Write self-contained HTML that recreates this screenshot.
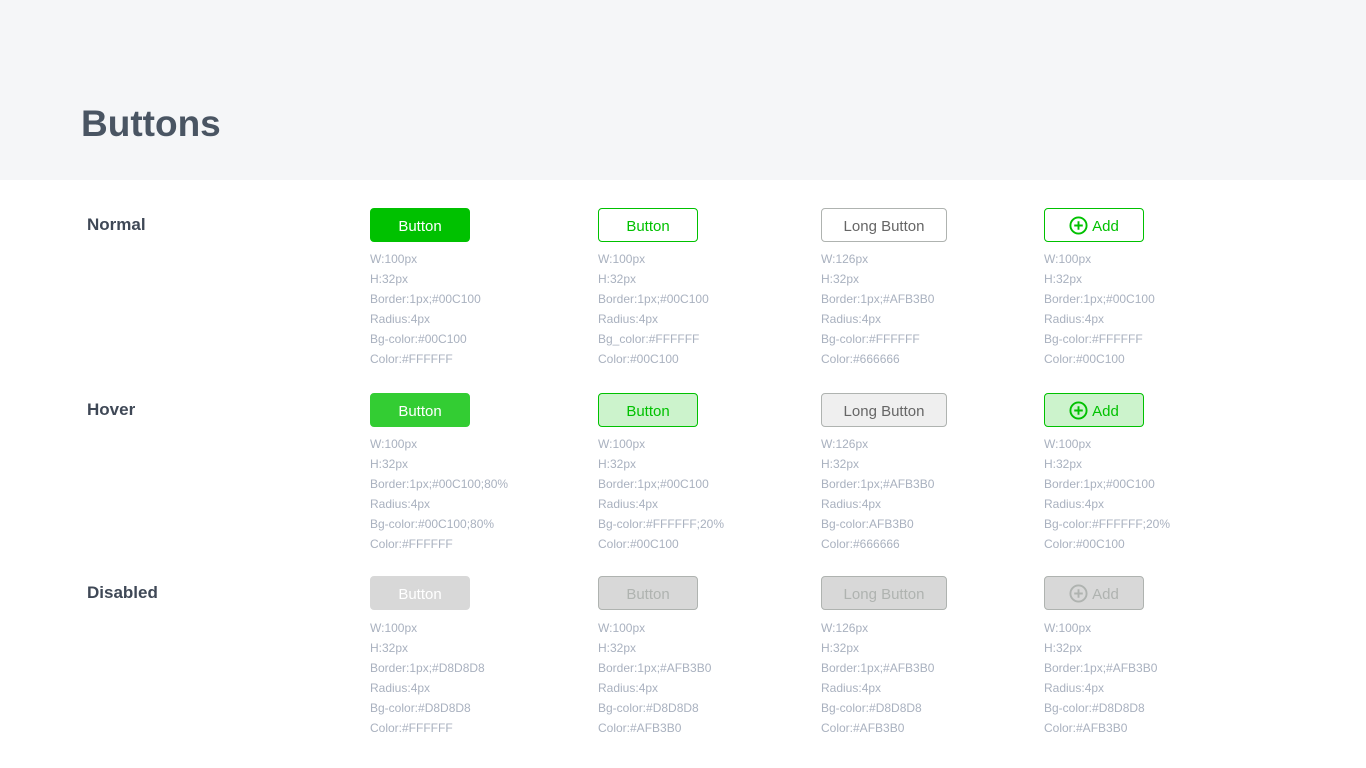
<!DOCTYPE html>
<html><head><meta charset="utf-8"><style>
*{margin:0;padding:0;box-sizing:border-box}
body{width:1366px;height:768px;background:#fff;font-family:"Liberation Sans",sans-serif;position:relative;overflow:hidden}
.hd{position:absolute;left:0;top:0;width:1366px;height:180px;background:#f5f6f8}
.hd h1{position:absolute;left:81px;top:100px;font-size:37px;line-height:48px;font-weight:bold;color:#4a5563}
.lbl{position:absolute;left:87px;font-size:17px;font-weight:bold;color:#3f4856}
.b{position:absolute;height:34px;border-radius:4px;border:1px solid;font-size:15px;display:flex;align-items:center;justify-content:center;gap:4px;padding-top:2px}
.s{position:absolute;font-size:12px;line-height:20px;color:#a9b1bf}
svg{display:block;margin-top:-2px}
</style></head><body>
<div class="hd"><h1>Buttons</h1></div>

<div class="lbl" style="top:215px">Normal</div>
<div class="lbl" style="top:400px">Hover</div>
<div class="lbl" style="top:583px">Disabled</div>

<div class="b" style="left:370px;top:208px;width:100px;background:#00c100;border-color:#00c100;color:#fff">Button</div>
<div class="b" style="left:598px;top:208px;width:100px;background:#fff;border-color:#00c100;color:#00c100">Button</div>
<div class="b" style="left:821px;top:208px;width:126px;background:#fff;border-color:#afb3b0;color:#666">Long Button</div>
<div class="b" style="left:1044px;top:208px;width:100px;background:#fff;border-color:#00c100;color:#00c100"><svg width="19" height="19" viewBox="0 0 20 20"><circle cx="10" cy="10" r="8.5" fill="none" stroke="#00c100" stroke-width="2"/><path d="M10 5.5v9M5.5 10h9" stroke="#00c100" stroke-width="2"/></svg>Add</div>

<div class="s" style="left:370px;top:249px">W:100px<br>H:32px<br>Border:1px;#00C100<br>Radius:4px<br>Bg-color:#00C100<br>Color:#FFFFFF</div>
<div class="s" style="left:598px;top:249px">W:100px<br>H:32px<br>Border:1px;#00C100<br>Radius:4px<br>Bg_color:#FFFFFF<br>Color:#00C100</div>
<div class="s" style="left:821px;top:249px">W:126px<br>H:32px<br>Border:1px;#AFB3B0<br>Radius:4px<br>Bg-color:#FFFFFF<br>Color:#666666</div>
<div class="s" style="left:1044px;top:249px">W:100px<br>H:32px<br>Border:1px;#00C100<br>Radius:4px<br>Bg-color:#FFFFFF<br>Color:#00C100</div>

<div class="b" style="left:370px;top:393px;width:100px;background:#33cd33;border-color:#33cd33;color:#fff">Button</div>
<div class="b" style="left:598px;top:393px;width:100px;background:#ccf3cc;border-color:#00c100;color:#00c100">Button</div>
<div class="b" style="left:821px;top:393px;width:126px;background:#efefef;border-color:#afb3b0;color:#666">Long Button</div>
<div class="b" style="left:1044px;top:393px;width:100px;background:#ccf3cc;border-color:#00c100;color:#00c100"><svg width="19" height="19" viewBox="0 0 20 20"><circle cx="10" cy="10" r="8.5" fill="none" stroke="#00c100" stroke-width="2"/><path d="M10 5.5v9M5.5 10h9" stroke="#00c100" stroke-width="2"/></svg>Add</div>

<div class="s" style="left:370px;top:434px">W:100px<br>H:32px<br>Border:1px;#00C100;80%<br>Radius:4px<br>Bg-color:#00C100;80%<br>Color:#FFFFFF</div>
<div class="s" style="left:598px;top:434px">W:100px<br>H:32px<br>Border:1px;#00C100<br>Radius:4px<br>Bg-color:#FFFFFF;20%<br>Color:#00C100</div>
<div class="s" style="left:821px;top:434px">W:126px<br>H:32px<br>Border:1px;#AFB3B0<br>Radius:4px<br>Bg-color:AFB3B0<br>Color:#666666</div>
<div class="s" style="left:1044px;top:434px">W:100px<br>H:32px<br>Border:1px;#00C100<br>Radius:4px<br>Bg-color:#FFFFFF;20%<br>Color:#00C100</div>

<div class="b" style="left:370px;top:576px;width:100px;background:#d8d8d8;border-color:#d8d8d8;color:#fff">Button</div>
<div class="b" style="left:598px;top:576px;width:100px;background:#d8d8d8;border-color:#afb3b0;color:#afb3b0">Button</div>
<div class="b" style="left:821px;top:576px;width:126px;background:#d8d8d8;border-color:#afb3b0;color:#afb3b0">Long Button</div>
<div class="b" style="left:1044px;top:576px;width:100px;background:#d8d8d8;border-color:#afb3b0;color:#afb3b0"><svg width="19" height="19" viewBox="0 0 20 20"><circle cx="10" cy="10" r="8.5" fill="none" stroke="#afb3b0" stroke-width="2"/><path d="M10 5.5v9M5.5 10h9" stroke="#afb3b0" stroke-width="2"/></svg>Add</div>

<div class="s" style="left:370px;top:618px">W:100px<br>H:32px<br>Border:1px;#D8D8D8<br>Radius:4px<br>Bg-color:#D8D8D8<br>Color:#FFFFFF</div>
<div class="s" style="left:598px;top:618px">W:100px<br>H:32px<br>Border:1px;#AFB3B0<br>Radius:4px<br>Bg-color:#D8D8D8<br>Color:#AFB3B0</div>
<div class="s" style="left:821px;top:618px">W:126px<br>H:32px<br>Border:1px;#AFB3B0<br>Radius:4px<br>Bg-color:#D8D8D8<br>Color:#AFB3B0</div>
<div class="s" style="left:1044px;top:618px">W:100px<br>H:32px<br>Border:1px;#AFB3B0<br>Radius:4px<br>Bg-color:#D8D8D8<br>Color:#AFB3B0</div>
</body></html>
